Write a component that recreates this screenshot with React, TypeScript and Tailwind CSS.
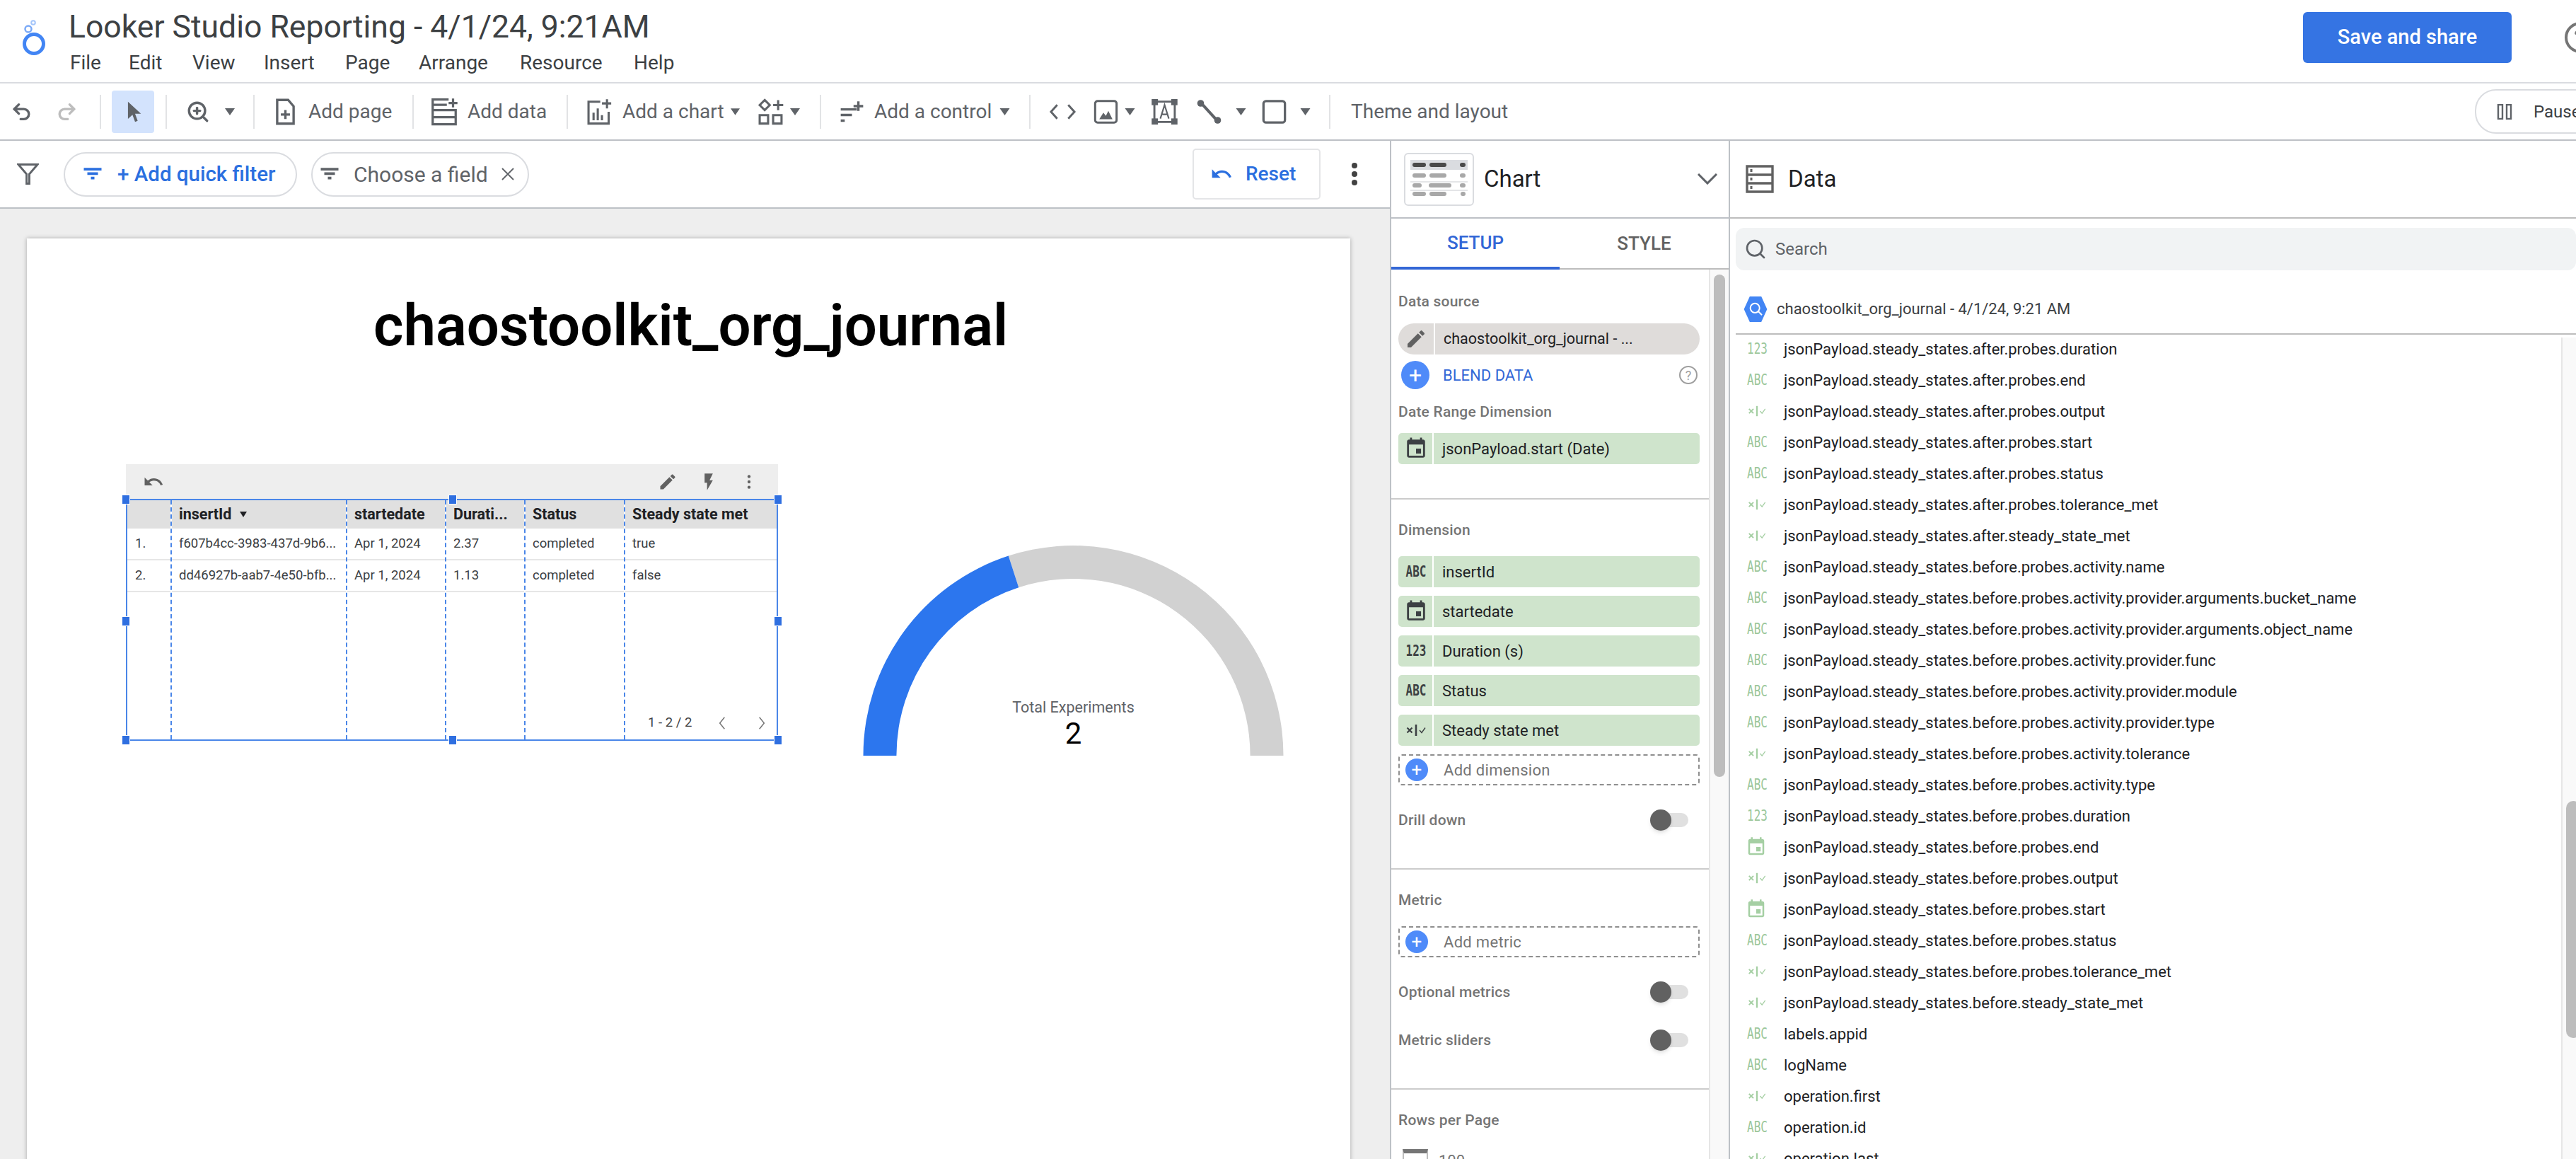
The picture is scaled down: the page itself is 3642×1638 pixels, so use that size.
import React from "react";
import { CircleHelp, Redo2, Search, Undo2, ZoomIn } from "lucide-react";

type FieldType = "abc" | "num" | "date" | "bool";

const FIELD_ROWS: [FieldType, string][] = [
  ["num", "jsonPayload.steady_states.after.probes.duration"],
  ["abc", "jsonPayload.steady_states.after.probes.end"],
  ["bool", "jsonPayload.steady_states.after.probes.output"],
  ["abc", "jsonPayload.steady_states.after.probes.start"],
  ["abc", "jsonPayload.steady_states.after.probes.status"],
  ["bool", "jsonPayload.steady_states.after.probes.tolerance_met"],
  ["bool", "jsonPayload.steady_states.after.steady_state_met"],
  ["abc", "jsonPayload.steady_states.before.probes.activity.name"],
  ["abc", "jsonPayload.steady_states.before.probes.activity.provider.arguments.bucket_name"],
  ["abc", "jsonPayload.steady_states.before.probes.activity.provider.arguments.object_name"],
  ["abc", "jsonPayload.steady_states.before.probes.activity.provider.func"],
  ["abc", "jsonPayload.steady_states.before.probes.activity.provider.module"],
  ["abc", "jsonPayload.steady_states.before.probes.activity.provider.type"],
  ["bool", "jsonPayload.steady_states.before.probes.activity.tolerance"],
  ["abc", "jsonPayload.steady_states.before.probes.activity.type"],
  ["num", "jsonPayload.steady_states.before.probes.duration"],
  ["date", "jsonPayload.steady_states.before.probes.end"],
  ["bool", "jsonPayload.steady_states.before.probes.output"],
  ["date", "jsonPayload.steady_states.before.probes.start"],
  ["abc", "jsonPayload.steady_states.before.probes.status"],
  ["bool", "jsonPayload.steady_states.before.probes.tolerance_met"],
  ["bool", "jsonPayload.steady_states.before.steady_state_met"],
  ["abc", "labels.appid"],
  ["abc", "logName"],
  ["bool", "operation.first"],
  ["abc", "operation.id"],
  ["bool", "operation.last"],
];

const CalendarIcon = ({ className }: { className: string }) => (
  <svg viewBox="0 0 24 24" fill="currentColor" className={className}>
    <path d="M17 12h-5v5h5v-5zM16 1v2H8V1H6v2H5c-1.11 0-1.99.9-1.99 2L3 19c0 1.1.89 2 2 2h14c1.1 0 2-.9 2-2V5c0-1.1-.9-2-2-2h-1V1h-2zm3 18H5V8h14v11z" />
  </svg>
);

const BoolIcon = ({ className }: { className: string }) => (
  <svg viewBox="0 0 28 20" fill="none" stroke="currentColor" className={className}>
    <path d="M1.5 6.5l7 7M8.5 6.5l-7 7" strokeWidth="2.2" />
    <path d="M14 2v16" strokeWidth="2.6" />
    <path d="M19 10l3 3.5 5-7" strokeWidth="1.4" />
  </svg>
);

const PencilIcon = ({ className }: { className: string }) => (
  <svg viewBox="0 0 24 24" fill="currentColor" className={className}>
    <path d="M3 17.25V21h3.75L17.81 9.94l-3.75-3.75L3 17.25zM20.71 7.04c.39-.39.39-1.02 0-1.41l-2.34-2.34c-.39-.39-1.02-.39-1.41 0l-1.83 1.83 3.75 3.75 1.83-1.83z" />
  </svg>
);

const ResetIcon = ({ className }: { className: string }) => (
  <svg viewBox="0 0 24 24" fill="currentColor" className={className}>
    <path d="M12.5 8c-2.65 0-5.05.99-6.9 2.6L2 7v9h9l-3.62-3.62c1.39-1.16 3.16-1.88 5.12-1.88 3.54 0 6.55 2.31 7.6 5.5l2.37-.78C21.08 11.03 17.15 8 12.5 8z" />
  </svg>
);

const FilterLines = ({ className }: { className: string }) => (
  <svg viewBox="0 0 24 24" fill="currentColor" className={className}>
    <path d="M10 18h4v-3h-4v3zM2 5v3h20V5H2zm4 8h12v-3H6v3z" />
  </svg>
);

const Caret = ({ className }: { className: string }) => (
  <svg viewBox="0 0 14 10" fill="#5f6368" className={`h-[10px] shrink-0 ${className}`}>
    <path d="M0 0h14L7 10z" />
  </svg>
);

const Sep = ({ className }: { className: string }) => (
  <div className={`h-[48px] w-[2px] shrink-0 bg-[#e2e3e5] ${className}`} />
);

const ToolText = ({ className, children }: { className: string; children: React.ReactNode }) => (
  <div className={`shrink-0 whitespace-nowrap text-[28px] leading-[32px] text-[#5f6368] ${className}`}>
    {children}
  </div>
);

const ChipBadge = ({ type }: { type: FieldType }) => {
  if (type === "date") return <CalendarIcon className="h-[34px] w-[34px] text-[#3c4043]" />;
  if (type === "bool") return <BoolIcon className="h-[20px] w-[28px] text-[#3c4043]" />;
  return (
    <span className="w-[30px] scale-y-[1.35] text-center font-['DejaVu_Sans_Mono',monospace] text-[16px] font-bold leading-[20px] text-[#3c4043]">
      {type === "abc" ? "ABC" : "123"}
    </span>
  );
};

const ListBadge = ({ type }: { type: FieldType }) => {
  if (type === "date") return <CalendarIcon className="-ml-[2px] h-[32px] w-[32px] text-[#a5cfa3]" />;
  if (type === "bool") return <BoolIcon className="h-[18px] w-[28px] text-[#a5cfa3]" />;
  return (
    <span className="w-[28px] scale-y-[1.3] text-center font-['DejaVu_Sans_Mono',monospace] text-[16px] leading-[20px] text-[#9cc79b]">
      {type === "abc" ? "ABC" : "123"}
    </span>
  );
};

const Chip = ({ type, label }: { type: FieldType; label: string }) => (
  <div className="flex h-[44px] w-[426px] overflow-hidden rounded-[5px] bg-[#cfe4cc]">
    <div className="flex w-[50px] shrink-0 items-center justify-center border-r-2 border-white pl-[2px]">
      <ChipBadge type={type} />
    </div>
    <div className="ml-[12px] flex items-center text-[22px] text-[#202124]">{label}</div>
  </div>
);

const AddChip = ({ label, className }: { label: string; className: string }) => (
  <div className={`flex h-[44px] w-[426px] items-center rounded-[5px] border-2 border-dashed border-[#8f8f8f] ${className}`}>
    <div className="ml-[8px] flex h-[32px] w-[32px] items-center justify-center rounded-full bg-[#4f8bf9] text-[26px] leading-none text-white">
      +
    </div>
    <div className="ml-[22px] text-[22px] tracking-[0.3px] text-[#757575]">{label}</div>
  </div>
);

const SectionLabel = ({ children, className = "" }: { children: React.ReactNode; className?: string }) => (
  <div className={`h-[24px] text-[21px] font-medium leading-[24px] tracking-[0.2px] text-[#757575] ${className}`}>
    {children}
  </div>
);

const Toggle = () => (
  <div className="relative mr-[16px] h-[20px] w-[46px] rounded-full bg-[#e0e0e0]">
    <div className="absolute -left-[8px] -top-[5px] h-[30px] w-[30px] rounded-full bg-[#616161] shadow-md" />
  </div>
);

const ToggleRow = ({ label, className }: { label: string; className: string }) => (
  <div className={`flex h-[24px] w-[426px] items-center justify-between ${className}`}>
    <SectionLabel>{label}</SectionLabel>
    <Toggle />
  </div>
);

const Handle = ({ className }: { className: string }) => (
  <div className={`absolute h-[14px] w-[12px] border border-white bg-[#2f6fe0] ${className}`} />
);

const COLUMNS = [
  { w: "w-[63px]", head: "", cells: ["1.", "2."] },
  { w: "w-[248px]", head: "insertId", cells: ["f607b4cc-3983-437d-9b6...", "dd46927b-aab7-4e50-bfb..."] },
  { w: "w-[140px]", head: "startedate", cells: ["Apr 1, 2024", "Apr 1, 2024"] },
  { w: "w-[112px]", head: "Durati...", cells: ["2.37", "1.13"] },
  { w: "w-[141px]", head: "Status", cells: ["completed", "completed"] },
  { w: "w-[218px]", head: "Steady state met", cells: ["true", "false"] },
];

const TableWidget = () => (
  <div className="w-[922px] shrink-0">
    <div className="flex h-[49px] items-center justify-between bg-[#eeeeee] pl-[24px] pr-[28px] text-[#616161]">
      <ResetIcon className="h-[30px] w-[30px]" />
      <div className="flex items-center gap-[30px]">
        <PencilIcon className="h-[28px] w-[28px]" />
        <svg viewBox="0 0 24 24" fill="currentColor" className="h-[28px] w-[28px]">
          <path d="M7 2v11h3v9l7-12h-4l4-8z" />
        </svg>
        <svg viewBox="0 0 24 24" fill="currentColor" className="h-[26px] w-[26px]">
          <circle cx="12" cy="5" r="2" />
          <circle cx="12" cy="12" r="2" />
          <circle cx="12" cy="19" r="2" />
        </svg>
      </div>
    </div>
    <div className="relative flex h-[342px] border-y-2 border-[#4a86e8] outline-2 -outline-offset-2 outline-[#4a86e8]">
      {COLUMNS.map((col, i) => (
        <div
          key={col.head + i}
          className={`flex h-full flex-col ${col.w} ${i > 0 ? "border-l-2 border-dashed border-[#4a86e8]" : ""}`}
        >
          <div className="flex h-[40px] shrink-0 items-center whitespace-nowrap bg-[#e0e0e0] pl-[10px] text-[21.5px] font-bold text-[#202124]">
            {col.head}
            {col.head === "insertId" && (
              <svg viewBox="0 0 10 8" fill="#202124" className="ml-[12px] h-[8px] w-[10px]">
                <path d="M0 0h10L5 8z" />
              </svg>
            )}
          </div>
          {col.cells.map((cell) => (
            <div
              key={cell + i}
              className={`flex h-[45px] shrink-0 items-center whitespace-nowrap border-b-2 border-[#e6e6e6] text-[18.5px] text-[#3c4043] ${i === 0 ? "pl-[13px]" : "pl-[10px]"}`}
            >
              {cell}
            </div>
          ))}
          {i === 5 && (
            <div className="mt-auto flex h-[46px] items-center pl-[32px] text-[#424242]">
              <span className="w-[62px] whitespace-nowrap text-[18.5px]">1 - 2 / 2</span>
              <svg viewBox="0 0 12 24" fill="none" stroke="#757575" strokeWidth="1.8" className="ml-[37px] h-[20px] w-[12px]">
                <path d="M10 2L2 12l8 10" />
              </svg>
              <svg viewBox="0 0 12 24" fill="none" stroke="#757575" strokeWidth="1.8" className="ml-[44px] h-[20px] w-[12px]">
                <path d="M2 2l8 10-8 10" />
              </svg>
            </div>
          )}
        </div>
      ))}
      <Handle className="-left-[6px] -top-[8px]" />
      <Handle className="left-[456px] -top-[8px]" />
      <Handle className="-right-[6px] -top-[8px]" />
      <Handle className="-left-[6px] top-[164px]" />
      <Handle className="-right-[6px] top-[164px]" />
      <Handle className="-left-[6px] -bottom-[8px]" />
      <Handle className="left-[456px] -bottom-[8px]" />
      <Handle className="-right-[6px] -bottom-[8px]" />
    </div>
  </div>
);

const Gauge = () => (
  <div className="relative ml-[120px] mt-[115px] h-[297px] w-[595px] shrink-0">
    <svg viewBox="0 0 595 297.5" className="h-[297px] w-[595px]">
      <path
        d="M205.6 14.6A297.5 297.5 0 0 1 595 297.5H548A250.5 250.5 0 0 0 220.1 59.3Z"
        fill="#d1d1d1"
      />
      <path d="M0 297.5A297.5 297.5 0 0 1 205.6 14.6L220.1 59.3A250.5 250.5 0 0 0 47 297.5Z" fill="#2c76ee" />
    </svg>
    <div className="absolute inset-x-0 bottom-[8px] flex flex-col items-center">
      <div className="text-[21.5px] leading-[24px] text-[#5f6368]">Total Experiments</div>
      <div className="mt-[2px] text-[42px] leading-[46px] text-black">2</div>
    </div>
  </div>
);

const App = () => {
  return (
    <div className="flex h-[1638px] w-[3642px] flex-col overflow-hidden bg-white font-[Roboto,sans-serif]">
      {/* title bar */}
      <header className="flex h-[118px] shrink-0 border-b-2 border-[#dadce0]">
        <svg viewBox="0 0 34 50" fill="none" className="ml-[31px] mt-[28px] h-[50px] w-[34px] shrink-0">
          <circle cx="17" cy="34" r="13.5" stroke="#4285f4" strokeWidth="5" />
          <circle cx="9" cy="13" r="4.5" stroke="#7baaf7" strokeWidth="2.5" />
          <circle cx="16" cy="4" r="2.8" stroke="#a4c5fa" strokeWidth="2" />
        </svg>
        <div className="ml-[32px] flex w-[900px] shrink-0 flex-col">
          <h1 className="mt-[15px] h-[46px] whitespace-nowrap text-[44.5px] font-normal leading-[46px] text-[#3c4043]">
            Looker Studio Reporting - 4/1/24, 9:21AM
          </h1>
          <nav className="mt-[13px] flex text-[28px] leading-[30px] text-[#3c4043]">
            <a className="ml-[2px] w-[83px]">File</a>
            <a className="w-[90px]">Edit</a>
            <a className="w-[101px]">View</a>
            <a className="w-[115px]">Insert</a>
            <a className="w-[104px]">Page</a>
            <a className="w-[143px]">Arrange</a>
            <a className="w-[161px]">Resource</a>
            <a>Help</a>
          </nav>
        </div>
        <button className="ml-[2259px] mt-[17px] h-[72px] w-[295px] shrink-0 rounded-[6px] bg-[#3574e3] text-[29px] font-medium text-white">
          Save and share
        </button>
        <CircleHelp className="ml-[73px] mt-[29px] h-[48px] w-[48px] shrink-0 text-[#757575]" strokeWidth={2} />
      </header>

      {/* toolbar */}
      <div className="flex h-[81px] shrink-0 items-center border-b-2 border-[#bdc1c6] text-[#5f6368]">
        <Undo2 className="ml-[15px] h-[36px] w-[31px] shrink-0" strokeWidth={2.6} />
        <Redo2 className="ml-[33px] h-[36px] w-[31px] shrink-0 text-[#bdbdbd]" strokeWidth={2.6} />
        <Sep className="ml-[31px]" />
        <div className="ml-[15px] flex h-[60px] w-[60px] shrink-0 items-center justify-center rounded-[4px] bg-[#d3e3fd]">
          <svg viewBox="0 0 24 24" fill="#5f6368" className="h-[34px] w-[34px]">
            <path d="M7 2v17l4.5-4 2.6 7 2.6-1-2.6-7H20z" />
          </svg>
        </div>
        <Sep className="ml-[16px]" />
        <ZoomIn className="ml-[27px] h-[38px] w-[34px] shrink-0" strokeWidth={2.4} />
        <Caret className="ml-[21px] w-[14px]" />
        <Sep className="ml-[26px]" />
        <svg viewBox="0 0 24 30" fill="none" stroke="currentColor" strokeWidth="2.6" className="ml-[28px] h-[40px] w-[31px] shrink-0">
          <path d="M3 2h12l6 7v19H3zM12 13v10M7 18h10" />
        </svg>
        <ToolText className="ml-[17px] w-[118px]">Add page</ToolText>
        <Sep className="ml-[29px]" />
        <svg viewBox="0 0 30 32" fill="none" stroke="currentColor" strokeWidth="2.6" className="ml-[24px] h-[40px] w-[38px] shrink-0">
          <path d="M20 2H2v28h26V14H2M2 8h16M25 1v10M20 6h10M2 22h26M7 8v0M7 18v0M7 26v0" />
        </svg>
        <ToolText className="ml-[14px] w-[111px]">Add data</ToolText>
        <Sep className="ml-[29px]" />
        <svg viewBox="0 0 30 32" fill="none" stroke="currentColor" strokeWidth="2.6" className="ml-[25px] h-[38px] w-[39px] shrink-0">
          <path d="M16 4H2v26h24V16M24 1v11M18 6h11M8 26V17M13 26V12M18 26v-6" />
        </svg>
        <ToolText className="ml-[13px] w-[141px]">Add a chart</ToolText>
        <Caret className="ml-[12px] w-[13px]" />
        <svg viewBox="0 0 30 32" fill="none" stroke="currentColor" strokeWidth="2.6" className="ml-[25px] h-[38px] w-[37px] shrink-0">
          <path d="M8 2l6 6-6 6-6-6zM24 2v12M18 8h12M2 20h10v10H2zM18 20h10v10H18z" />
        </svg>
        <Caret className="ml-[9px] w-[14px]" />
        <Sep className="ml-[28px]" />
        <svg viewBox="0 0 32 30" fill="none" stroke="currentColor" strokeWidth="3" className="ml-[23px] h-[34px] w-[41px] shrink-0">
          <path d="M2 12h20M2 19h14M2 26h5M18 8h12M24 2v12" />
        </svg>
        <ToolText className="ml-[11px] w-[165px]">Add a control</ToolText>
        <Caret className="ml-[12px] w-[15px]" />
        <Sep className="ml-[27px]" />
        <svg viewBox="0 0 40 24" fill="none" stroke="currentColor" strokeWidth="3" className="ml-[26px] h-[26px] w-[39px] shrink-0">
          <path d="M12 2L3 12l9 10M28 2l9 10-9 10" />
        </svg>
        <svg viewBox="0 0 30 30" fill="none" stroke="currentColor" strokeWidth="2.6" className="ml-[24px] h-[36px] w-[35px] shrink-0">
          <rect x="2" y="2" width="26" height="26" rx="3" />
          <path d="M7 24l5-8 3 4 3-6 5 10z" fill="currentColor" stroke="none" />
        </svg>
        <Caret className="ml-[9px] w-[15px]" />
        <svg viewBox="0 0 30 30" fill="none" stroke="currentColor" strokeWidth="2.4" className="ml-[23px] h-[36px] w-[37px] shrink-0">
          <path d="M5 3h20M5 27h20M3 5v20M27 5v20" />
          <rect x="1" y="1" width="5" height="5" fill="currentColor" />
          <rect x="24" y="1" width="5" height="5" fill="currentColor" />
          <rect x="1" y="24" width="5" height="5" fill="currentColor" />
          <rect x="24" y="24" width="5" height="5" fill="currentColor" />
          <path d="M10 23l5-16 5 16M11.5 18h7" strokeWidth="1.8" />
        </svg>
        <svg viewBox="0 0 30 30" fill="none" stroke="currentColor" strokeWidth="3.4" className="ml-[26px] h-[36px] w-[37px] shrink-0">
          <path d="M5 4l20 22" />
          <circle cx="5" cy="5" r="4" fill="currentColor" stroke="none" />
          <circle cx="25" cy="25" r="4" fill="currentColor" stroke="none" />
        </svg>
        <Caret className="ml-[19px] w-[15px]" />
        <svg viewBox="0 0 30 30" fill="none" stroke="currentColor" strokeWidth="2.8" className="ml-[22px] h-[36px] w-[35px] shrink-0">
          <rect x="2" y="2" width="26" height="26" rx="3" />
        </svg>
        <Caret className="ml-[19px] w-[15px]" />
        <Sep className="ml-[26px]" />
        <ToolText className="ml-[29px] w-[220px]">Theme and layout</ToolText>
        <div className="ml-[1369px] flex h-[63px] w-[200px] shrink-0 items-center rounded-l-[30px] border-2 border-[#dadce0] pl-[29px]">
          <svg viewBox="0 0 22 22" fill="none" stroke="currentColor" strokeWidth="2.4" className="h-[22px] w-[22px] shrink-0">
            <rect x="2" y="1" width="6" height="20" />
            <rect x="14" y="1" width="6" height="20" />
          </svg>
          <span className="ml-[30px] text-[24px] text-[#3c4043]">Pause</span>
        </div>
      </div>

      <div className="flex min-h-0 flex-1">
        {/* report area */}
        <main className="flex w-[1965px] shrink-0 flex-col">
          <div className="flex h-[96px] shrink-0 items-center border-b-2 border-[#bdc1c6]">
            <svg viewBox="0 0 32 32" fill="none" stroke="#5f6368" strokeWidth="3" className="ml-[24px] h-[32px] w-[31px] shrink-0">
              <path d="M2 2h28L18 16v14h-4V16z" />
            </svg>
            <div className="ml-[35px] flex h-[63px] w-[330px] shrink-0 items-center rounded-full border-2 border-[#dadce0] pl-[24px] text-[#2b6fdf]">
              <FilterLines className="h-[30px] w-[30px] shrink-0" />
              <span className="ml-[20px] whitespace-nowrap text-[29.5px] font-medium">+ Add quick filter</span>
            </div>
            <div className="ml-[20px] flex h-[63px] w-[308px] shrink-0 items-center rounded-full border-2 border-[#dadce0] pl-[9px] text-[#5f6368]">
              <FilterLines className="h-[30px] w-[30px] shrink-0" />
              <span className="ml-[19px] w-[190px] whitespace-nowrap text-[30px]">Choose a field</span>
              <svg viewBox="0 0 20 20" fill="none" stroke="currentColor" strokeWidth="1.8" className="ml-[18px] h-[20px] w-[20px] shrink-0">
                <path d="M2 2l16 16M18 2L2 18" />
              </svg>
            </div>
            <div className="ml-[938px] flex h-[72px] w-[181px] shrink-0 items-center rounded-[5px] border-2 border-[#e4e5e7] pl-[23px] text-[#2b6fdf]">
              <ResetIcon className="h-[32px] w-[32px] shrink-0" />
              <span className="ml-[18px] text-[28px] font-medium">Reset</span>
            </div>
            <svg viewBox="0 0 8 32" fill="#424242" className="ml-[44px] h-[32px] w-[8px] shrink-0">
              <circle cx="4" cy="4" r="4" />
              <circle cx="4" cy="16" r="4" />
              <circle cx="4" cy="28" r="4" />
            </svg>
          </div>
          <div className="min-h-0 flex-1 overflow-hidden bg-[#eeeeee] pl-[38px] pt-[42px]">
            <div className="h-[1400px] w-[1871px] bg-white shadow-[0_0_6px_rgba(0,0,0,0.3)]">
              <div className="h-[319px] pl-[6px] pt-[78px] text-center text-[81.5px] font-semibold leading-[90px] text-black">
                chaostoolkit_org_journal
              </div>
              <div className="flex items-start pl-[140px]">
                <TableWidget />
                <Gauge />
              </div>
            </div>
          </div>
        </main>

        {/* chart properties */}
        <aside className="flex w-[481px] shrink-0 flex-col border-x-2 border-[#bdc1c6]">
          <div className="flex h-[110px] shrink-0 items-center border-b-2 border-[#bdc1c6]">
            <div className="ml-[18px] flex h-[75px] w-[99px] shrink-0 flex-col gap-[4px] rounded-[6px] border-2 border-[#dadce0] px-[7px] pt-[8px]">
              <div className="flex h-[14px] items-center gap-[5px] bg-[#dadce0] px-[3px]">
                <div className="h-[6px] w-[19px] rounded-sm bg-[#4a4a4a]" />
                <div className="h-[6px] w-[24px] rounded-sm bg-[#4a4a4a]" />
                <div className="ml-auto h-[6px] w-[8px] rounded-sm bg-[#4a4a4a]" />
              </div>
              <div className="flex h-[8px] items-center gap-[5px] px-[3px]">
                <div className="h-[6px] w-[19px] rounded-sm bg-[#a8a8a8]" />
                <div className="h-[6px] w-[24px] rounded-sm bg-[#a8a8a8]" />
                <div className="ml-auto h-[6px] w-[8px] rounded-sm bg-[#a8a8a8]" />
              </div>
              <div className="flex h-[8px] items-center gap-[10px] border-t-2 border-[#e4e5e7] px-[3px] pt-[2px]">
                <div className="h-[6px] w-[13px] rounded-sm bg-[#a8a8a8]" />
                <div className="h-[6px] w-[32px] rounded-sm bg-[#a8a8a8]" />
                <div className="ml-auto h-[6px] w-[8px] rounded-sm bg-[#a8a8a8]" />
              </div>
              <div className="flex h-[8px] items-center gap-[5px] border-t-2 border-[#e4e5e7] px-[3px] pt-[2px]">
                <div className="h-[6px] w-[19px] rounded-sm bg-[#a8a8a8]" />
                <div className="h-[6px] w-[24px] rounded-sm bg-[#a8a8a8]" />
                <div className="ml-auto h-[6px] w-[7px] rounded-sm bg-[#a8a8a8]" />
              </div>
            </div>
            <div className="ml-[14px] text-[33px] text-[#202124]">Chart</div>
            <svg viewBox="0 0 28 16" fill="none" stroke="#5f6368" strokeWidth="3" className="ml-auto mr-[16px] h-[16px] w-[28px]">
              <path d="M1 1l13 13L27 1" />
            </svg>
          </div>
          <div className="flex h-[72px] shrink-0 border-b-2 border-[#bdbdbd] text-[26px] font-medium">
            <div className="-mb-[2px] flex w-[238px] items-center justify-center border-b-4 border-[#3367d6] text-[#3367d6]">
              SETUP
            </div>
            <div className="flex flex-1 items-center justify-center text-[#616161]">STYLE</div>
          </div>
          <div className="flex min-h-0 flex-1">
            <div className="w-[449px] shrink-0 overflow-hidden">
              <section className="border-b-2 border-[#cccccc] pb-[48px] pl-[10px] pt-[33px]">
                <SectionLabel>Data source</SectionLabel>
                <div className="mt-[19px] flex h-[44px] w-[426px] overflow-hidden rounded-full bg-[#dfdcda]">
                  <div className="flex w-[52px] shrink-0 items-center justify-center border-r-2 border-white text-[#616161]">
                    <PencilIcon className="h-[32px] w-[32px]" />
                  </div>
                  <div className="ml-[12px] flex items-center text-[21.5px] text-[#202124]">
                    chaostoolkit_org_journal - ...
                  </div>
                </div>
                <div className="mt-[9px] flex h-[40px] w-[426px] items-center">
                  <div className="ml-[4px] flex h-[40px] w-[40px] items-center justify-center rounded-full bg-[#4f8bf9] text-[32px] leading-none text-white">
                    +
                  </div>
                  <div className="ml-[19px] text-[22px] text-[#3367d6]">BLEND DATA</div>
                  <div className="ml-auto mr-[3px] flex h-[26px] w-[26px] items-center justify-center rounded-full border-2 border-[#9e9e9e] text-[18px] text-[#9e9e9e]">
                    ?
                  </div>
                </div>
                <SectionLabel className="mt-[20px]">Date Range Dimension</SectionLabel>
                <div className="mt-[18px]">
                  <Chip type="date" label="jsonPayload.start (Date)" />
                </div>
              </section>
              <section className="border-b-2 border-[#cccccc] pb-[56px] pl-[10px] pt-[31px]">
                <SectionLabel>Dimension</SectionLabel>
                <div className="mt-[25px] flex flex-col gap-[12px]">
                  <Chip type="abc" label="insertId" />
                  <Chip type="date" label="startedate" />
                  <Chip type="num" label="Duration (s)" />
                  <Chip type="abc" label="Status" />
                  <Chip type="bool" label="Steady state met" />
                  <AddChip label="Add dimension" className="" />
                </div>
                <ToggleRow label="Drill down" className="mt-[37px]" />
              </section>
              <section className="border-b-2 border-[#cccccc] pb-[56px] pl-[10px] pt-[31px]">
                <SectionLabel>Metric</SectionLabel>
                <AddChip label="Add metric" className="mt-[25px]" />
                <ToggleRow label="Optional metrics" className="mt-[37px]" />
                <ToggleRow label="Metric sliders" className="mt-[44px]" />
              </section>
              <section className="pl-[10px] pt-[31px]">
                <SectionLabel>Rows per Page</SectionLabel>
                <div className="ml-[6px] mt-[29px] flex items-start">
                  <div className="h-[32px] w-[36px] border-2 border-t-[6px] border-[#bdbdbd] border-t-[#757575]" />
                  <span className="ml-[15px] text-[22px] text-[#757575]">100</span>
                </div>
              </section>
            </div>
            <div className="flex-1 border-l-2 border-[#e6e6e6] bg-[#f9f9f9] pl-[5px] pt-[7px]">
              <div className="h-[710px] w-[16px] rounded-full bg-[#bdbdbd]" />
            </div>
          </div>
        </aside>

        {/* data panel */}
        <aside className="flex min-w-0 flex-1 flex-col">
          <div className="flex h-[110px] shrink-0 items-center border-b-2 border-[#bdbdbd]">
            <svg viewBox="0 0 40 40" fill="none" stroke="#616161" strokeWidth="3.4" className="ml-[22px] h-[40px] w-[40px] shrink-0">
              <path d="M2 2h36v36H2zM2 14h36M2 26h36" />
              <path d="M8 6v4M8 18v4M8 30v4" strokeWidth="3" />
            </svg>
            <div className="ml-[20px] text-[33px] text-[#202124]">Data</div>
          </div>
          <div className="ml-[8px] mt-[13px] flex h-[60px] shrink-0 items-center rounded-xl bg-[#f1f3f4] pl-[12px]">
            <Search className="h-[32px] w-[32px] text-[#5f6368]" strokeWidth={2} />
            <span className="ml-[12px] text-[24px] text-[#5f6368]">Search</span>
          </div>
          <div className="ml-[8px] flex h-[91px] shrink-0 items-center border-b-2 border-[#bdbdbd] pt-[20px]">
            <svg viewBox="0 0 40 44" className="ml-[8px] h-[36px] w-[40px] shrink-0">
              <path d="M10 0h20l10 22-10 22H10L0 22z" fill="#4285f4" />
              <circle cx="19" cy="20" r="8" fill="none" stroke="#fff" strokeWidth="2.4" />
              <path d="M25 26l6 6" stroke="#fff" strokeWidth="2.4" />
            </svg>
            <span className="ml-[10px] whitespace-nowrap text-[22px] text-[#3c4043]">
              chaostoolkit_org_journal - 4/1/24, 9:21 AM
            </span>
          </div>
          <div className="flex min-h-0 flex-1">
            <div className="min-w-0 flex-1 overflow-hidden pt-0">
              <div className="-mt-[2px]">
                {FIELD_ROWS.map(([type, name]) => (
                  <div key={name} className="flex h-[44px] items-center">
                    <div className="ml-[24px] flex w-[28px] shrink-0 items-center justify-center">
                      <ListBadge type={type} />
                    </div>
                    <span className="ml-[24px] whitespace-nowrap text-[22px] text-[#202124]">{name}</span>
                  </div>
                ))}
              </div>
            </div>
            <div className="mt-[4px] w-[21px] shrink-0 border-l-2 border-[#e6e6e6] bg-[#f9f9f9] pl-[5px] pt-[655px]">
              <div className="h-[335px] w-[20px] rounded-full bg-[#bdbdbd]" />
            </div>
          </div>
        </aside>
      </div>
    </div>
  );
};

export default App;
